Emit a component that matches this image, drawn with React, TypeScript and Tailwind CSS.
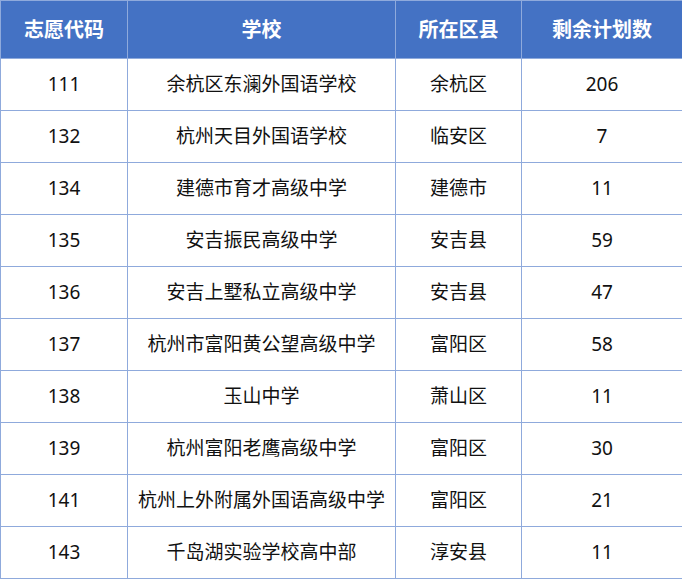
const rows: [string, string, string, string][] = [
  ["111", "余杭区东澜外国语学校", "余杭区", "206"],
  ["132", "杭州天目外国语学校", "临安区", "7"],
  ["134", "建德市育才高级中学", "建德市", "11"],
  ["135", "安吉振民高级中学", "安吉县", "59"],
  ["136", "安吉上墅私立高级中学", "安吉县", "47"],
  ["137", "杭州市富阳黄公望高级中学", "富阳区", "58"],
  ["138", "玉山中学", "萧山区", "11"],
  ["139", "杭州富阳老鹰高级中学", "富阳区", "30"],
  ["141", "杭州上外附属外国语高级中学", "富阳区", "21"],
  ["143", "千岛湖实验学校高中部", "淳安县", "11"],
]

const headers = ["志愿代码", "学校", "所在区县", "剩余计划数"]

export default function App() {
  return (
    <div className="w-[682px] h-[579px] bg-white font-['Noto_Sans','Noto_Sans_CJK_SC',sans-serif]">
      <table className="w-[682px] border-collapse table-fixed">
        <colgroup>
          <col className="w-[127px]" />
          <col className="w-[268px]" />
          <col className="w-[126px]" />
          <col className="w-[161px]" />
        </colgroup>
        <thead>
          <tr className="h-[58px] bg-[#4472C4]">
            {headers.map((h) => (
              <th
                key={h}
                className="border border-[#8FAADC] text-white text-[20px] font-bold text-center p-0"
              >
                {h}
              </th>
            ))}
          </tr>
        </thead>
        <tbody>
          {rows.map((r) => (
            <tr key={r[0]} className="h-[52px]">
              {r.map((c, i) => (
                <td
                  key={i}
                  className="border border-[#8FAADC] text-[19px] text-[#111] text-center p-0"
                >
                  {c}
                </td>
              ))}
            </tr>
          ))}
        </tbody>
      </table>
    </div>
  )
}
